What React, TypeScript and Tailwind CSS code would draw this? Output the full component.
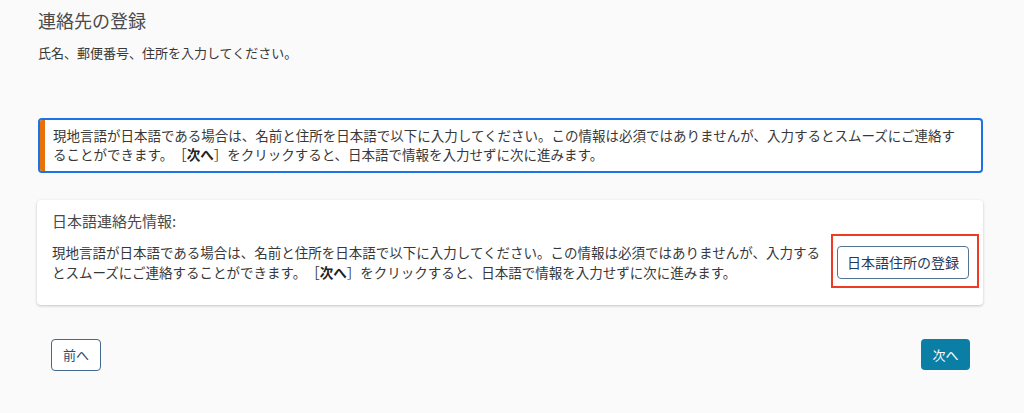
const font = { fontFamily: '"Noto Sans CJK JP", "Noto Sans", sans-serif' };

function Bold({ children }: { children: string }) {
  return <b className="font-bold text-[#222]">{children}</b>;
}

export default function App() {
  return (
    <main
      style={font}
      className="min-h-screen w-full bg-[#fafafa] pl-[38px] pr-[41px] pt-[8px] text-[#444] [text-spacing-trim:space-all]"
    >
      <h1 className="text-[18px] leading-[24px] font-normal text-[#4a4a4a]">
        連絡先の登録
      </h1>
      <p className="mt-[11px] text-[13px] leading-[20px] text-[#383838]">
        氏名、郵便番号、住所を入力してください。
      </p>

      {/* 注意メッセージ */}
      <div className="mt-[55px] flex rounded-[4px] border-2 border-[#1a73e8] bg-white overflow-hidden">
        <div className="w-[5px] shrink-0 bg-[#e8710a]" />
        <p className="pl-[8px] pr-[17px] pt-[6px] pb-[7px] text-[13.5px] leading-[19px] text-[#383838]">
          現地言語が日本語である場合は、名前と住所を日本語で以下に入力してください。この情報は必須ではありませんが、入力するとスムーズにご連絡することができます。［<Bold>次へ</Bold>］をクリックすると、日本語で情報を入力せずに次に進みます。
        </p>
      </div>

      {/* 日本語連絡先 */}
      <section className="mt-[27px] ml-[-1px] rounded-[4px] bg-white pl-[15px] pr-[14px] pt-[10px] pb-[23px] shadow-[0_1px_3px_rgba(0,0,0,0.22)]">
        <h2 className="text-[15px] leading-[22px] font-normal text-[#4a4a4a]">
          日本語連絡先情報:
        </h2>
        <div className="mt-[11px] flex items-center gap-[5px]">
          <p className="flex-1 text-[13.5px] leading-[19.5px] text-[#383838]">
            現地言語が日本語である場合は、名前と住所を日本語で以下に入力してください。この情報は必須ではありませんが、入力するとスムーズにご連絡することができます。［<Bold>次へ</Bold>］をクリックすると、日本語で情報を入力せずに次に進みます。
          </p>
          <div className="relative shrink-0">
            <button className="h-[33px] w-[132px] rounded-[4px] border border-[#557494] bg-white text-[14px] text-[#1f3b5c]">
              日本語住所の登録
            </button>
            <div className="pointer-events-none absolute left-[-6px] right-[-10px] top-[-12px] bottom-[-9px] border-2 border-[#ef3b24]" />
          </div>
        </div>
      </section>

      <div className="mt-[34px] flex items-start justify-between px-[13px]">
        <button className="h-[32px] w-[50px] rounded-[4px] border border-[#44698f] bg-white text-[13px] text-[#2a4c70]">
          前へ
        </button>
        <button className="h-[31px] w-[49px] rounded-[4px] bg-[#0a7ea4] text-[13px] text-white">
          次へ
        </button>
      </div>
    </main>
  );
}
